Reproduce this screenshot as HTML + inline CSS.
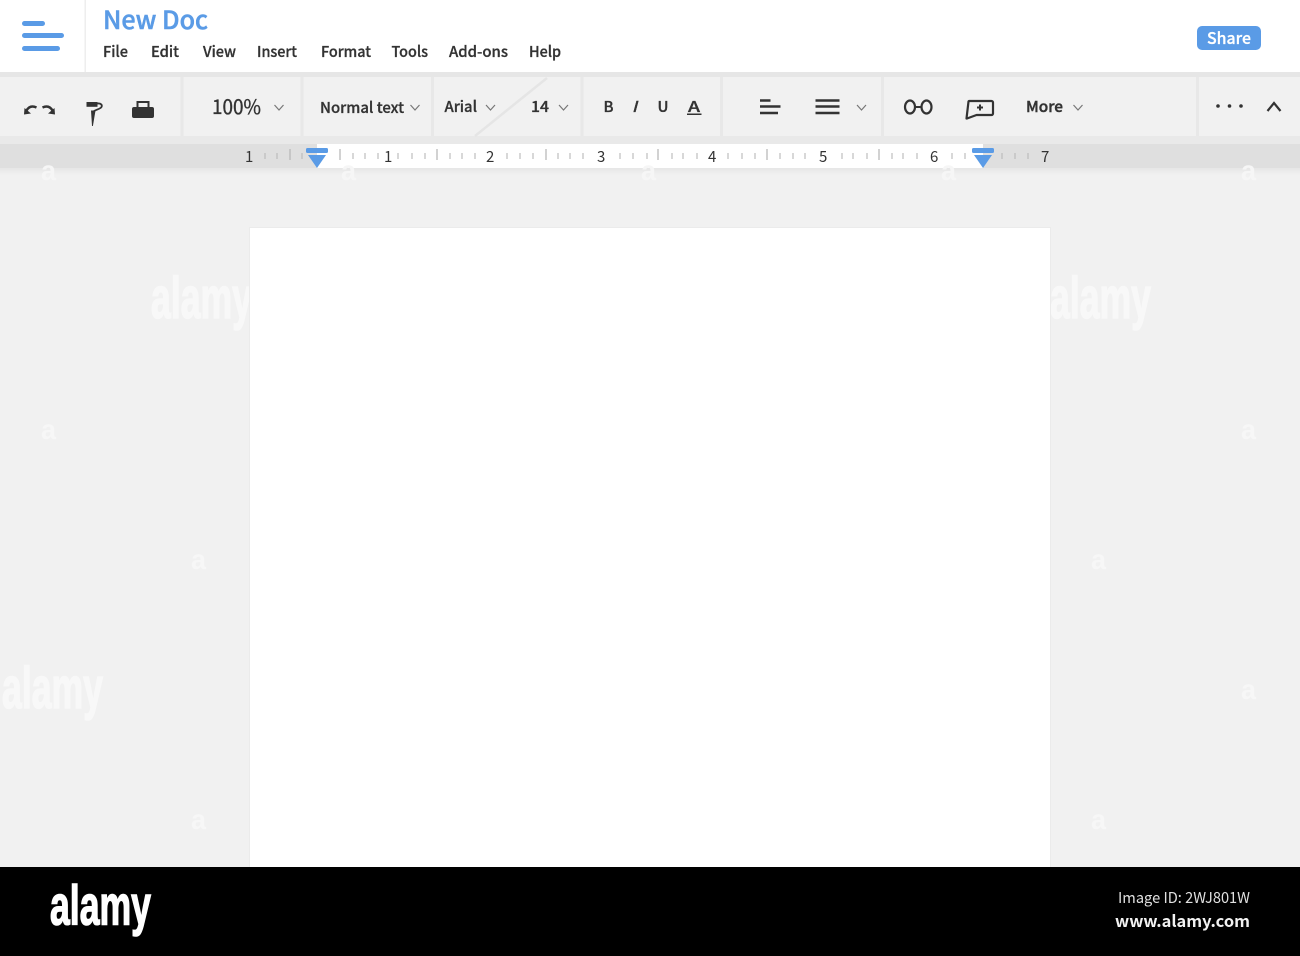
<!DOCTYPE html>
<html>
<head>
<meta charset="utf-8">
<title>New Doc</title>
<style>
html,body{margin:0;padding:0;background:#f1f1f1;width:1300px;height:956px;overflow:hidden}
svg{display:block}
text{font-family:"Noto Sans CJK JP","Liberation Sans",sans-serif;fill:#333}
.m{font-size:15px;font-weight:500;stroke:#333;stroke-width:.3}
.r{font-size:15px;font-weight:400;fill:#333}
.wm{font-family:"Liberation Sans",sans-serif;font-weight:700;fill:#f8f8f8;stroke:#f8f8f8;stroke-width:1.500}
.ws{font-family:"Liberation Sans",sans-serif;font-weight:700;fill:#f7f7f7;font-size:28px}
.ch{fill:none;stroke:#777;stroke-width:1.2}
.ic{fill:none;stroke:#333;stroke-width:2.2}
</style>
</head>
<body>
<svg width="1300" height="956" viewBox="0 0 1300 956" xmlns="http://www.w3.org/2000/svg">
<defs>
<linearGradient id="sh" x1="0" y1="0" x2="0" y2="1"><stop offset="0" stop-color="#e6e6e6"/><stop offset="1" stop-color="#f1f1f1"/></linearGradient>
</defs>
<rect width="1300" height="956" fill="#f1f1f1"/>

<!-- top bar -->
<rect width="1300" height="72" fill="#fff"/>
<rect x="84.500" y="0" width="1.500" height="72" fill="#eeeeee"/>
<rect x="22" y="21" width="23" height="5" rx="2.500" fill="#5a9be6"/>
<rect x="22" y="33" width="42" height="5" rx="2.500" fill="#5a9be6"/>
<rect x="22" y="46" width="38" height="5" rx="2.500" fill="#5a9be6"/>
<text x="103" y="29" font-size="25" font-weight="500" style="fill:#5a9be6;stroke:#5a9be6;stroke-width:.5" textLength="105" lengthAdjust="spacingAndGlyphs">New Doc</text>
<text class="m" x="103" y="57" textLength="25" lengthAdjust="spacingAndGlyphs">File</text>
<text class="m" x="151" y="57" textLength="28" lengthAdjust="spacingAndGlyphs">Edit</text>
<text class="m" x="203" y="57" textLength="33" lengthAdjust="spacingAndGlyphs">View</text>
<text class="m" x="257" y="57" textLength="40" lengthAdjust="spacingAndGlyphs">Insert</text>
<text class="m" x="321" y="57" textLength="50" lengthAdjust="spacingAndGlyphs">Format</text>
<text class="m" x="391.500" y="57" textLength="36.500" lengthAdjust="spacingAndGlyphs">Tools</text>
<text class="m" x="449" y="57" textLength="59" lengthAdjust="spacingAndGlyphs">Add-ons</text>
<text class="m" x="529" y="57" textLength="32" lengthAdjust="spacingAndGlyphs">Help</text>
<rect x="1197" y="26" width="64" height="24" rx="5" fill="#5a9be6"/>
<text x="1207" y="44" font-size="16" font-weight="500" style="fill:#fff;stroke:#fff;stroke-width:.3" textLength="44" lengthAdjust="spacingAndGlyphs">Share</text>

<!-- toolbar -->
<rect x="0" y="72" width="1300" height="5" fill="#e6e6e6"/>
<rect x="0" y="136" width="1300" height="8" fill="#e9e9e9"/>
<g fill="#e8e8e8">
<rect x="180.500" y="77" width="3" height="59"/>
<rect x="300.500" y="77" width="3" height="59"/>
<rect x="431" y="77" width="3" height="59"/>
<rect x="580.500" y="77" width="3" height="59"/>
<rect x="720" y="77" width="3" height="59"/>
<rect x="881" y="77" width="3" height="59"/>
<rect x="1196" y="77" width="3" height="59"/>
</g>
<path d="M475 136L547 78" stroke="#e5e5e5" stroke-width="2.500" fill="none"/>

<!-- undo / redo -->
<path d="M36.500 107.500Q30 104.500 26.500 110.500" fill="none" stroke="#333" stroke-width="2.400"/>
<path d="M24 114.500L24.500 108L31 113.500z" fill="#333"/>
<path d="M42.500 107.500Q49 104.500 52.500 110.500" fill="none" stroke="#333" stroke-width="2.400"/>
<path d="M55 114.500L54.500 108L48 113.500z" fill="#333"/>
<!-- paint roller -->
<path d="M86.500 102h11v4.800h-11z" fill="#333"/>
<path d="M97 103.500C101 103 102.500 105 101.500 107C100.500 109 96 109.500 93.500 111.500" fill="none" stroke="#333" stroke-width="1.800"/>
<path d="M91 110.500h4.500l-2.600 15.500h-0.900z" fill="#333"/>
<!-- printer -->
<rect x="137.500" y="102" width="11" height="6" fill="none" stroke="#333" stroke-width="2"/>
<path d="M134 107h18a2 2 0 0 1 2 2v7a2 2 0 0 1-2 2h-18a2 2 0 0 1-2-2v-7a2 2 0 0 1 2-2z" fill="#333"/>

<text x="212" y="114" font-size="20" font-weight="400" style="stroke:#333;stroke-width:.35" textLength="49" lengthAdjust="spacingAndGlyphs">100%</text>
<path class="ch" d="M274.500 105l4.500 5l4.500-5"/>
<text class="m" x="320" y="113" textLength="84" lengthAdjust="spacingAndGlyphs">Normal text</text>
<path class="ch" d="M410.500 105l4.500 5l4.500-5"/>
<text class="m" x="444.500" y="112" textLength="32.500" lengthAdjust="spacingAndGlyphs">Arial</text>
<path class="ch" d="M486 105l4.500 5l4.500-5"/>
<text class="m" x="531" y="112" textLength="18" lengthAdjust="spacingAndGlyphs">14</text>
<path class="ch" d="M559 105l4.500 5l4.500-5"/>
<text class="m" x="603.500" y="112" font-weight="700" textLength="10" lengthAdjust="spacingAndGlyphs">B</text>
<text class="m" x="632" y="112" font-style="italic" textLength="5" lengthAdjust="spacingAndGlyphs">I</text>
<text class="m" x="657.500" y="112" textLength="11" lengthAdjust="spacingAndGlyphs">U</text>
<text class="m" x="688" y="112" textLength="12" lengthAdjust="spacingAndGlyphs">A</text>
<rect x="687" y="113.500" width="14.500" height="1.500" fill="#333"/>
<!-- align -->
<g stroke="#333" stroke-width="2.600" fill="none">
<path d="M760 100.500h10.500M760 106.500h20.500M760 113h18"/>
<path d="M815.500 100.500h24M815.500 106.500h24M815.500 113h24"/>
</g>
<path class="ch" d="M857 105l4.500 5l4.500-5"/>
<!-- link -->
<ellipse class="ic" cx="910" cy="107" rx="5" ry="6.500"/>
<ellipse class="ic" cx="926.500" cy="107" rx="5" ry="6.500"/>
<path d="M915 107h6.500" stroke="#333" stroke-width="2" fill="none"/>
<!-- comment -->
<path class="ic" d="M969.500 101h22a1.500 1.500 0 0 1 1.500 1.500v11a1.500 1.500 0 0 1-1.500 1.500h-15l-9.500 3.500h-0.500l2-17a1 1 0 0 1 .5-.5z" stroke-linejoin="round"/>
<path d="M977 107.500h6M980 104.500v6" stroke="#333" stroke-width="2" fill="none"/>
<text class="m" x="1026" y="112" style="stroke-width:.45" textLength="37" lengthAdjust="spacingAndGlyphs">More</text>
<path class="ch" d="M1073.500 105l4.500 5l4.500-5"/>
<circle cx="1218" cy="106" r="1.800" fill="#333"/>
<circle cx="1229.500" cy="106" r="1.800" fill="#333"/>
<circle cx="1241" cy="106" r="1.800" fill="#333"/>
<path d="M1267.500 111l6.500-8l6.500 8" fill="none" stroke="#333" stroke-width="2.200"/>

<!-- ruler -->
<rect x="0" y="168" width="1300" height="7" fill="url(#sh)"/>
<rect x="0" y="144" width="1300" height="24" fill="#dfdfdf"/>
<rect x="317" y="144" width="666" height="24" fill="#fff"/>
<path d="M265 153v6M277 153v6M302 153v6M353 153v6M365 153v6M378 153v6M398 153v6M412 153v6M425 153v6M450 153v6M462 153v6M475 153v6M507 153v6M520 153v6M533 153v6M558 153v6M570 153v6M583 153v6M620 153v6M633 153v6M647 153v6M672 153v6M683 153v6M697 153v6M728 153v6M742 153v6M755 153v6M780 153v6M793 153v6M805 153v6M842 153v6M853 153v6M867 153v6M892 153v6M903 153v6M917 153v6M952 153v6M965 153v6M1002 153v6M1015 153v6M1028 153v6" stroke="#bdbdbd" stroke-width="1.200" fill="none"/>
<path d="M290 149v11M340 149v11M437 149v11M546 149v11M658 149v11M767 149v11M879 149v11" stroke="#b5b5b5" stroke-width="1.200" fill="none"/>
<text class="r" x="245" y="162">1</text>
<text class="r" x="384" y="162">1</text>
<text class="r" x="486" y="162">2</text>
<text class="r" x="597" y="162">3</text>
<text class="r" x="708" y="162">4</text>
<text class="r" x="819" y="162">5</text>
<text class="r" x="930" y="162">6</text>
<text class="r" x="1041" y="162">7</text>
<rect x="306" y="148" width="22" height="5" rx="1.500" fill="#5a9be6"/>
<path d="M308 155h18l-9 13z" fill="#5a9be6"/>
<rect x="972" y="148" width="22" height="5" rx="1.500" fill="#5a9be6"/>
<path d="M974 155h18l-9 13z" fill="#5a9be6"/>

<!-- watermarks -->
<text class="ws" x="41" y="180" style="fill:#f6f6f6" textLength="15" lengthAdjust="spacingAndGlyphs">a</text>
<text class="ws" x="341" y="180" style="fill:#f6f6f6" textLength="15" lengthAdjust="spacingAndGlyphs">a</text>
<text class="ws" x="641" y="180" style="fill:#f6f6f6" textLength="15" lengthAdjust="spacingAndGlyphs">a</text>
<text class="ws" x="941" y="180" style="fill:#f6f6f6" textLength="15" lengthAdjust="spacingAndGlyphs">a</text>
<text class="ws" x="1241" y="180" style="fill:#f6f6f6" textLength="15" lengthAdjust="spacingAndGlyphs">a</text>
<text class="ws" x="41" y="439" textLength="15" lengthAdjust="spacingAndGlyphs">a</text>
<text class="ws" x="1241" y="439" textLength="15" lengthAdjust="spacingAndGlyphs">a</text>
<text class="ws" x="191" y="569" textLength="15" lengthAdjust="spacingAndGlyphs">a</text>
<text class="ws" x="1091" y="569" textLength="15" lengthAdjust="spacingAndGlyphs">a</text>
<text class="ws" x="1241" y="699" textLength="15" lengthAdjust="spacingAndGlyphs">a</text>
<text class="ws" x="191" y="829" textLength="15" lengthAdjust="spacingAndGlyphs">a</text>
<text class="ws" x="1091" y="829" textLength="15" lengthAdjust="spacingAndGlyphs">a</text>
<text class="wm" x="151" y="318" font-size="58" textLength="101" lengthAdjust="spacingAndGlyphs">alamy</text>
<text class="wm" x="1050" y="318" font-size="58" textLength="101" lengthAdjust="spacingAndGlyphs">alamy</text>
<text class="wm" x="2" y="708" font-size="58" textLength="101" lengthAdjust="spacingAndGlyphs">alamy</text>

<!-- page -->
<rect x="249" y="227" width="802" height="640" fill="#ebebeb"/>
<rect x="250" y="228" width="800" height="639" fill="#fff"/>

<!-- footer -->
<rect x="0" y="867" width="1300" height="89" fill="#000"/>
<text x="50" y="924.500" font-size="56" font-weight="700" style="font-family:'Liberation Sans',sans-serif;fill:#fff;stroke:#fff;stroke-width:1.500" textLength="101" lengthAdjust="spacingAndGlyphs">alamy</text>
<text x="1118" y="903" font-size="15" style="fill:#e0e0e0" textLength="132" lengthAdjust="spacingAndGlyphs">Image ID: 2WJ801W</text>
<text x="1115" y="927" font-size="16" font-weight="700" style="fill:#f2f2f2" textLength="135" lengthAdjust="spacingAndGlyphs">www.alamy.com</text>
</svg>
</body>
</html>
